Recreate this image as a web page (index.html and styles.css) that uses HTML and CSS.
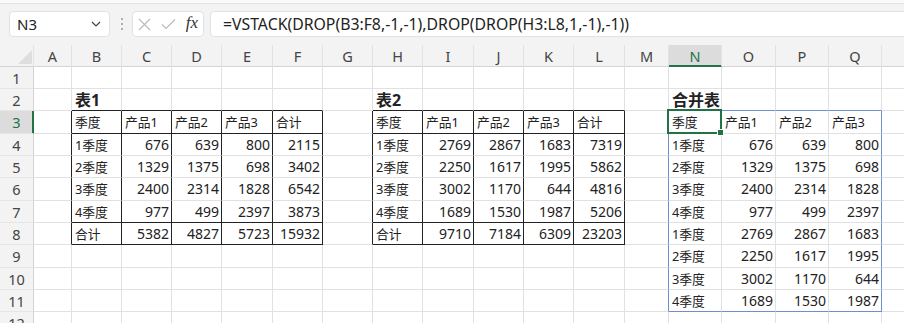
FILE: index.html
```html
<!DOCTYPE HTML>
<html>
<head>
  <title>VSTACK DROP 合并表</title>
  <meta charset="utf-8">
  <link rel="stylesheet" href="styles.css">
</head>
<body>
  <div class="ribbon-edge"></div>

  <div class="fbar">
    <div class="namebox">
      <span>N3</span>
      <svg class="chev" width="10" height="6" viewBox="0 0 10 6"><path d="M1 1 L5 5 L9 1" fill="none" stroke="#444" stroke-width="1.2"/></svg>
    </div>
    <svg class="grip" width="4" height="14" viewBox="0 0 4 14">
      <circle cx="2" cy="2" r="1" fill="#9a9a9a"/>
      <circle cx="2" cy="7" r="1" fill="#9a9a9a"/>
      <circle cx="2" cy="12" r="1" fill="#9a9a9a"/>
    </svg>
    <div class="fxbox">
      <svg width="13" height="13" viewBox="0 0 13 13"><path d="M1 1 L12 12 M12 1 L1 12" stroke="#b9b9b9" stroke-width="1.1" fill="none"/></svg>
      <svg width="15" height="12" viewBox="0 0 15 12"><path d="M1 6.5 L5 10.5 L14 1.5" stroke="#b9b9b9" stroke-width="1.1" fill="none"/></svg>
      <span class="fx">fx</span>
    </div>
    <div class="formula">=VSTACK(DROP(B3:F8,-1,-1),DROP(DROP(H3:L8,1,-1),-1))</div>
  </div>

  <table class="sheet">
    <colgroup>
      <col style="width:34px"><col style="width:38px">
      <col style="width:50px"><col style="width:50px"><col style="width:50px"><col style="width:51px"><col style="width:50px">
      <col style="width:50px"><col style="width:50px"><col style="width:51px"><col style="width:50px"><col style="width:50px"><col style="width:51px">
      <col style="width:44px">
      <col style="width:53px"><col style="width:54px"><col style="width:53px"><col style="width:53px">
      <col style="width:70px">
    </colgroup>
    <tr class="heads">
      <td class="corner"><svg width="14" height="14" viewBox="0 0 14 14"><path d="M14 0 L14 14 L0 14 Z" fill="#dedede"/></svg></td>
      <td>A</td><td>B</td><td>C</td><td>D</td><td>E</td><td>F</td><td>G</td><td>H</td><td>I</td><td>J</td><td>K</td><td>L</td><td>M</td>
      <td class="on">N</td><td>O</td><td>P</td><td>Q</td><td></td>
    </tr>
    <tr>
      <td class="rh">1</td>
      <td></td><td></td><td></td><td></td><td></td><td></td><td></td><td></td><td></td><td></td><td></td><td></td><td></td><td></td><td></td><td></td><td></td><td></td>
    </tr>
    <tr class="db sb">
      <td class="rh">2</td>
      <td></td><td class="t">表1</td><td></td><td></td><td></td><td></td>
      <td></td><td class="t">表2</td><td></td><td></td><td></td><td></td>
      <td></td><td class="t">合并表</td><td></td><td></td><td></td><td></td>
    </tr>
    <tr class="tall db tb sp">
      <td class="rh on">3</td>
      <td></td><td>季度</td><td>产品1</td><td>产品2</td><td>产品3</td><td>合计</td>
      <td></td><td>季度</td><td>产品1</td><td>产品2</td><td>产品3</td><td>合计</td>
      <td></td><td class="act">季度<span class="sel"><i></i></span></td><td>产品1</td><td>产品2</td><td>产品3</td><td></td>
    </tr>
    <tr class="tb sp">
      <td class="rh">4</td>
      <td></td><td>1季度</td><td class="n">676</td><td class="n">639</td><td class="n">800</td><td class="n">2115</td>
      <td></td><td>1季度</td><td class="n">2769</td><td class="n">2867</td><td class="n">1683</td><td class="n">7319</td>
      <td></td><td>1季度</td><td class="n">676</td><td class="n">639</td><td class="n">800</td><td></td>
    </tr>
    <tr class="tb sp">
      <td class="rh">5</td>
      <td></td><td>2季度</td><td class="n">1329</td><td class="n">1375</td><td class="n">698</td><td class="n">3402</td>
      <td></td><td>2季度</td><td class="n">2250</td><td class="n">1617</td><td class="n">1995</td><td class="n">5862</td>
      <td></td><td>2季度</td><td class="n">1329</td><td class="n">1375</td><td class="n">698</td><td></td>
    </tr>
    <tr class="tall tb sp">
      <td class="rh">6</td>
      <td></td><td>3季度</td><td class="n">2400</td><td class="n">2314</td><td class="n">1828</td><td class="n">6542</td>
      <td></td><td>3季度</td><td class="n">3002</td><td class="n">1170</td><td class="n">644</td><td class="n">4816</td>
      <td></td><td>3季度</td><td class="n">2400</td><td class="n">2314</td><td class="n">1828</td><td></td>
    </tr>
    <tr class="db tb sp">
      <td class="rh">7</td>
      <td></td><td>4季度</td><td class="n">977</td><td class="n">499</td><td class="n">2397</td><td class="n">3873</td>
      <td></td><td>4季度</td><td class="n">1689</td><td class="n">1530</td><td class="n">1987</td><td class="n">5206</td>
      <td></td><td>4季度</td><td class="n">977</td><td class="n">499</td><td class="n">2397</td><td></td>
    </tr>
    <tr class="db tb sp">
      <td class="rh">8</td>
      <td></td><td>合计</td><td class="n">5382</td><td class="n">4827</td><td class="n">5723</td><td class="n">15932</td>
      <td></td><td>合计</td><td class="n">9710</td><td class="n">7184</td><td class="n">6309</td><td class="n">23203</td>
      <td></td><td>1季度</td><td class="n">2769</td><td class="n">2867</td><td class="n">1683</td><td></td>
    </tr>
    <tr class="tall sp">
      <td class="rh">9</td>
      <td></td><td></td><td></td><td></td><td></td><td></td>
      <td></td><td></td><td></td><td></td><td></td><td></td>
      <td></td><td>2季度</td><td class="n">2250</td><td class="n">1617</td><td class="n">1995</td><td></td>
    </tr>
    <tr class="sp">
      <td class="rh">10</td>
      <td></td><td></td><td></td><td></td><td></td><td></td>
      <td></td><td></td><td></td><td></td><td></td><td></td>
      <td></td><td>3季度</td><td class="n">3002</td><td class="n">1170</td><td class="n">644</td><td></td>
    </tr>
    <tr class="sp sb">
      <td class="rh">11</td>
      <td></td><td></td><td></td><td></td><td></td><td></td>
      <td></td><td></td><td></td><td></td><td></td><td></td>
      <td></td><td>4季度</td><td class="n">1689</td><td class="n">1530</td><td class="n">1987</td><td></td>
    </tr>
    <tr>
      <td class="rh">12</td>
      <td></td><td></td><td></td><td></td><td></td><td></td><td></td><td></td><td></td><td></td><td></td><td></td><td></td><td></td><td></td><td></td><td></td><td></td>
    </tr>
  </table>
</body>
</html>
```

FILE: styles.css
```css
html, body{
  margin: 0; padding: 0;
}
body{
  width: 904px;
  height: 323px;
  overflow: hidden;
  background: #f3f3f3;
  color: #222;
  font-family: "Noto Sans", "Noto Sans CJK SC", sans-serif;
}

/* formula bar */
.ribbon-edge{
  height: 3px;
  background: #fafafa;
  border-bottom: 1px solid #e4e4e4;
}
.fbar{
  display: flex;
  align-items: center;
  height: 26px;
  padding: 7px 0 8px 9px;
}
.namebox, .fxbox, .formula{
  height: 26px;
  box-sizing: border-box;
  background: #fff;
  border: 1px solid #e2e2e2;
  border-radius: 4px;
  display: flex;
  align-items: center;
}
.namebox{
  width: 101px;
  padding: 0 8px 0 7px;
  justify-content: space-between;
  font-size: 15px;
  color: #222;
}
.grip{
  margin: 0 8px 0 10px;
}
.fxbox{
  width: 72px;
  padding: 0 5px 0 5px;
  justify-content: space-between;
}
.fx{
  font-family: "Liberation Serif", serif;
  font-style: italic;
  font-size: 17px;
  color: #333;
  margin-top: -2px;
}
.formula{
  flex: 1;
  margin: 0 -10px 0 6px;
  padding-left: 12px;
  font-size: 15.8px;
  color: #222;
  white-space: nowrap;
}

/* grid */
.sheet{
  border-collapse: separate;
  border-spacing: 0;
  table-layout: fixed;
  width: 952px;
  background: #fff;
}
.sheet td{
  height: 21px;
  padding: 0 2px 0 3px;
  border-right: 1px solid #e1e1e1;
  border-bottom: 1px solid #e1e1e1;
  font-size: 12.8px;
  line-height: 16px;
  white-space: nowrap;
  overflow: hidden;
  vertical-align: middle;
}
.sheet tr.tall td{
  height: 22px;
}
.sheet .heads td{
  height: 19px;
  background: #f3f3f3;
  color: #444;
  font-size: 14.5px;
  text-align: center;
  border-bottom-color: #d4d4d4;
  border-right-color: #e2e2e2;
  padding: 0;
}
.sheet .heads td.corner{
  text-align: right;
  vertical-align: bottom;
  padding: 0 1px 2px 0;
  line-height: 0;
}
.sheet .heads td.on{
  background: #dcdcdc;
  color: #217346;
  border-bottom: 1px solid #217346;
  box-shadow: inset 0 -1px 0 #217346;
}
.sheet td.rh{
  background: #f3f3f3;
  color: #444;
  font-size: 14.5px;
  text-align: center;
  padding: 0;
  border-right-color: #d4d4d4;
  border-bottom-color: #e6e6e6;
}
.sheet td.rh.on{
  background: #dcdcdc;
  color: #217346;
  border-right: 1px solid #217346;
  box-shadow: inset -1px 0 0 #217346;
}
.sheet td.n{
  text-align: right;
  font-size: 14px;
}
.sheet td.t{
  font-weight: bold;
  font-size: 16px;
  overflow: visible;
}

/* bordered tables: dark lines */
.sheet tr.db td:nth-child(n+3):nth-child(-n+7),
.sheet tr.db td:nth-child(n+9):nth-child(-n+13){
  border-bottom-color: #222;
}
.sheet tr.tb td:nth-child(n+2):nth-child(-n+13){
  border-right-color: #222;
}

/* spill range outline */
.sheet tr.sp td:nth-child(14),
.sheet tr.sp td:nth-child(18){
  border-right-color: #6b8fd0;
}
.sheet tr.sb td:nth-child(n+15):nth-child(-n+18){
  border-bottom-color: #6b8fd0;
}

/* active cell */
.sheet td.act{
  position: relative;
  overflow: visible;
}
.sel{
  position: absolute;
  top: -2px; left: -2px; right: -1px; bottom: -1px;
  border: 2px solid #217346;
}
.sel i{
  position: absolute;
  right: -4px; bottom: -4px;
  width: 5px; height: 5px;
  background: #217346;
  border: 1px solid #fff;
}
```
